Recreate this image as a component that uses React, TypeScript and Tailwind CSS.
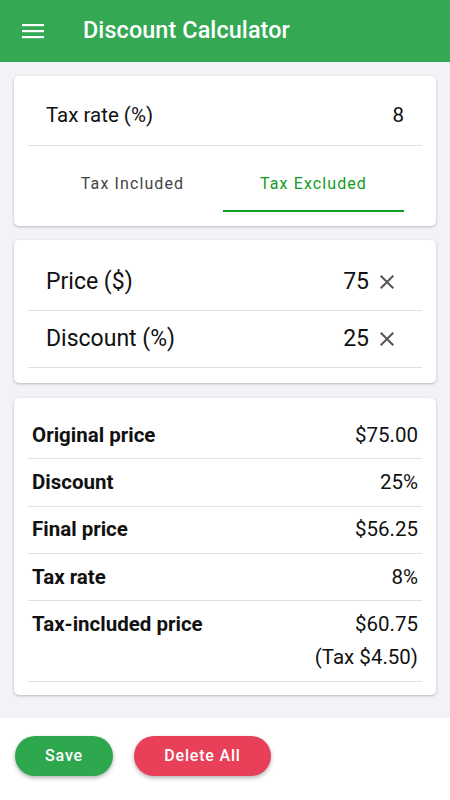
import { useState } from 'react';

const FONT = { fontFamily: 'Roboto, "Noto Sans", sans-serif' };

function MenuIcon() {
  return (
    <svg width="22" height="16" viewBox="0 0 22 16" fill="none">
      <rect x="0" y="1" width="22" height="2.2" fill="white" />
      <rect x="0" y="7" width="22" height="2.2" fill="white" />
      <rect x="0" y="13" width="22" height="2.2" fill="white" />
    </svg>
  );
}

function ClearIcon() {
  return (
    <svg width="24" height="24" viewBox="0 0 24 24" fill="#555">
      <path d="M19 6.41 17.59 5 12 10.59 6.41 5 5 6.41 10.59 12 5 17.59 6.41 19 12 13.41 17.59 19 19 17.59 13.41 12z" />
    </svg>
  );
}

const results = [
  { label: 'Original price', value: '$75.00' },
  { label: 'Discount', value: '25%' },
  { label: 'Final price', value: '$56.25' },
  { label: 'Tax rate', value: '8%' },
];

export default function App() {
  const [tab, setTab] = useState<'inc' | 'exc'>('exc');

  return (
    <div className="w-[450px] h-[800px] flex flex-col bg-white" style={FONT}>
      {/* App bar */}
      <header className="h-[62px] bg-[#34a853] flex items-center px-[22px] shadow-md shrink-0">
        <MenuIcon />
        <h1 className="ml-[39px] text-[23.4px] font-medium text-white tracking-[0.1px]">Discount Calculator</h1>
      </header>

      <main className="bg-[#f2f3f7] px-[14px] pt-[14px] pb-[23px] flex flex-col">
        {/* Tax card */}
        <section className="bg-white rounded-[5px] shadow-[0_1px_3px_rgba(0,0,0,0.25)] px-[14px] pb-[14px]">
          <div className="flex items-center justify-between pt-[26px] pb-[16px] px-[18px] border-b border-[#e0e0e0] text-[20.5px] leading-[27px] text-[#111]">
            <span>Tax rate (%)</span>
            <span>8</span>
          </div>
          <div className="flex pl-[14px] pr-[18px]">
            <button
              onClick={() => setTab('inc')}
              className={`flex-1 pt-[28px] pb-[16px] text-[16px] leading-[20px] tracking-[1.1px] border-b-2 ${tab === 'inc' ? 'text-[#109c22] border-[#109c22]' : 'text-[#444] border-transparent'}`}
            >
              Tax Included
            </button>
            <button
              onClick={() => setTab('exc')}
              className={`flex-1 pt-[28px] pb-[16px] text-[16px] leading-[20px] tracking-[1.1px] border-b-2 ${tab === 'exc' ? 'text-[#109c22] border-[#109c22]' : 'text-[#444] border-transparent'}`}
            >
              Tax Excluded
            </button>
          </div>
        </section>

        {/* Inputs card */}
        <section className="mt-[14px] bg-white rounded-[5px] shadow-[0_1px_3px_rgba(0,0,0,0.25)] px-[14px] pt-[14px] pb-[15px]">
          {[
            { label: 'Price ($)', value: '75' },
            { label: 'Discount (%)', value: '25' },
          ].map((r) => (
            <div key={r.label} className="h-[57px] flex items-center justify-between pl-[18px] pr-[23px] border-b border-[#e0e0e0] text-[23px] text-[#111]">
              <span>{r.label}</span>
              <span className="flex items-center gap-[6px]">
                {r.value}
                <ClearIcon />
              </span>
            </div>
          ))}
        </section>

        {/* Results card */}
        <section className="mt-[15px] bg-white rounded-[5px] shadow-[0_1px_3px_rgba(0,0,0,0.25)] px-[14px] pt-[14px] pb-[13px]">
          {results.map((r) => (
            <div key={r.label} className="h-[47.3px] flex items-center justify-between px-[4px] border-b border-[#e0e0e0] text-[20.5px] text-[#111]">
              <span className="font-bold">{r.label}</span>
              <span>{r.value}</span>
            </div>
          ))}
          <div className="flex justify-between px-[4px] pt-[7px] pb-[7px] border-b border-[#e0e0e0] text-[20.5px] leading-[33px] text-[#111]">
            <span className="font-bold">Tax-included price</span>
            <span className="flex flex-col items-end">
              <span>$60.75</span>
              <span>(Tax $4.50)</span>
            </span>
          </div>
        </section>
      </main>

      {/* Footer actions */}
      <footer className="flex gap-[21px] px-[15px] pt-[18px]">
        <button className="w-[98px] h-[40px] rounded-full bg-[#2ea84f] text-white text-[16px] font-medium tracking-[0.8px] shadow-[0_2px_4px_rgba(0,0,0,0.3)]">
          Save
        </button>
        <button className="w-[137px] h-[40px] rounded-full bg-[#e9405a] text-white text-[16px] font-medium tracking-[0.8px] shadow-[0_2px_4px_rgba(0,0,0,0.3)]">
          Delete All
        </button>
      </footer>
    </div>
  );
}
